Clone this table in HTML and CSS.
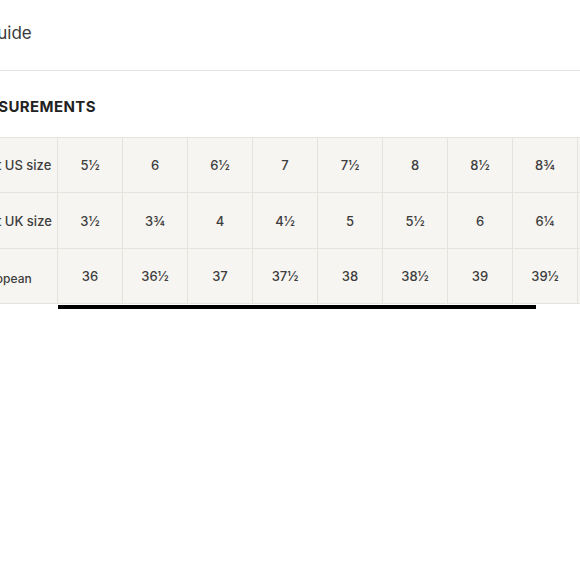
FILE: index.html
```html
<!DOCTYPE html>
<html>
<head>
<meta charset="utf-8">
<link rel="stylesheet" href="styles.css">
</head>
<body>
<div class="page">
  <header class="top">
    <h1 class="title">Size guide</h1>
  </header>
  <section class="section">
    <h2 class="heading">MEASUREMENTS</h2>
    <div class="scroll">
      <table class="sizes">
        <tr>
          <th class="label">Fit US size</th>
          <td>5½</td><td>6</td><td>6½</td><td>7</td><td>7½</td><td>8</td><td>8½</td><td>8¾</td><td>9</td>
        </tr>
        <tr class="mid">
          <th class="label">Fit UK size</th>
          <td>3½</td><td>3¾</td><td>4</td><td>4½</td><td>5</td><td>5½</td><td>6</td><td>6¼</td><td>6½</td>
        </tr>
        <tr>
          <th class="label small">European</th>
          <td>36</td><td>36½</td><td>37</td><td>37½</td><td>38</td><td>38½</td><td>39</td><td>39½</td><td>40</td>
        </tr>
      </table>
      <div class="track"><div class="thumb"></div></div>
    </div>
  </section>
</div>
</body>
</html>
```
FILE: styles.css
```css
html, body {
  margin: 0;
  padding: 0;
  background: #ffffff;
  overflow: hidden;
}
body {
  font-family: Inter, "Open Sans", sans-serif;
  color: #333333;
  width: 580px;
  height: 580px;
}
.page {
  width: 580px;
}
.top {
  height: 70px;
  border-bottom: 1px solid #e4e4e4;
  display: flex;
  align-items: center;
}
.title {
  margin: 0 0 4px -52px;
  font-size: 17px;
  font-weight: 400;
  color: #3a3a3a;
  white-space: nowrap;
}
.section {
  padding-top: 26px;
}
.heading {
  margin: 0 0 0 -37px;
  font-size: 15px;
  font-weight: 700;
  letter-spacing: 0.4px;
  color: #222222;
  line-height: 20px;
  white-space: nowrap;
}
.scroll {
  margin-top: 20px;
  margin-left: -23px;
  width: 700px;
}
.sizes {
  border-collapse: collapse;
  background: #f7f5f1;
}
.sizes th, .sizes td {
  border: 1px solid #e6e3de;
  height: 55px;
  padding: 0;
  font-size: 13px;
  font-weight: 500;
  color: #3d3d3d;
  white-space: nowrap;
  box-sizing: border-box;
}
.mid th, .mid td {
  height: 56px;
}
.sizes td {
  width: 65px;
  text-align: center;
}
.label {
  width: 80px;
  text-align: left;
  padding-left: 8px !important;
}
.label.small {
  font-size: 12px !important;
  padding-top: 4px !important;
  text-indent: -9px;
}
.track {
  height: 4px;
  margin-top: 1px;
  margin-left: 81px;
}
.thumb {
  width: 478px;
  height: 4px;
  background: #000000;
}
```
